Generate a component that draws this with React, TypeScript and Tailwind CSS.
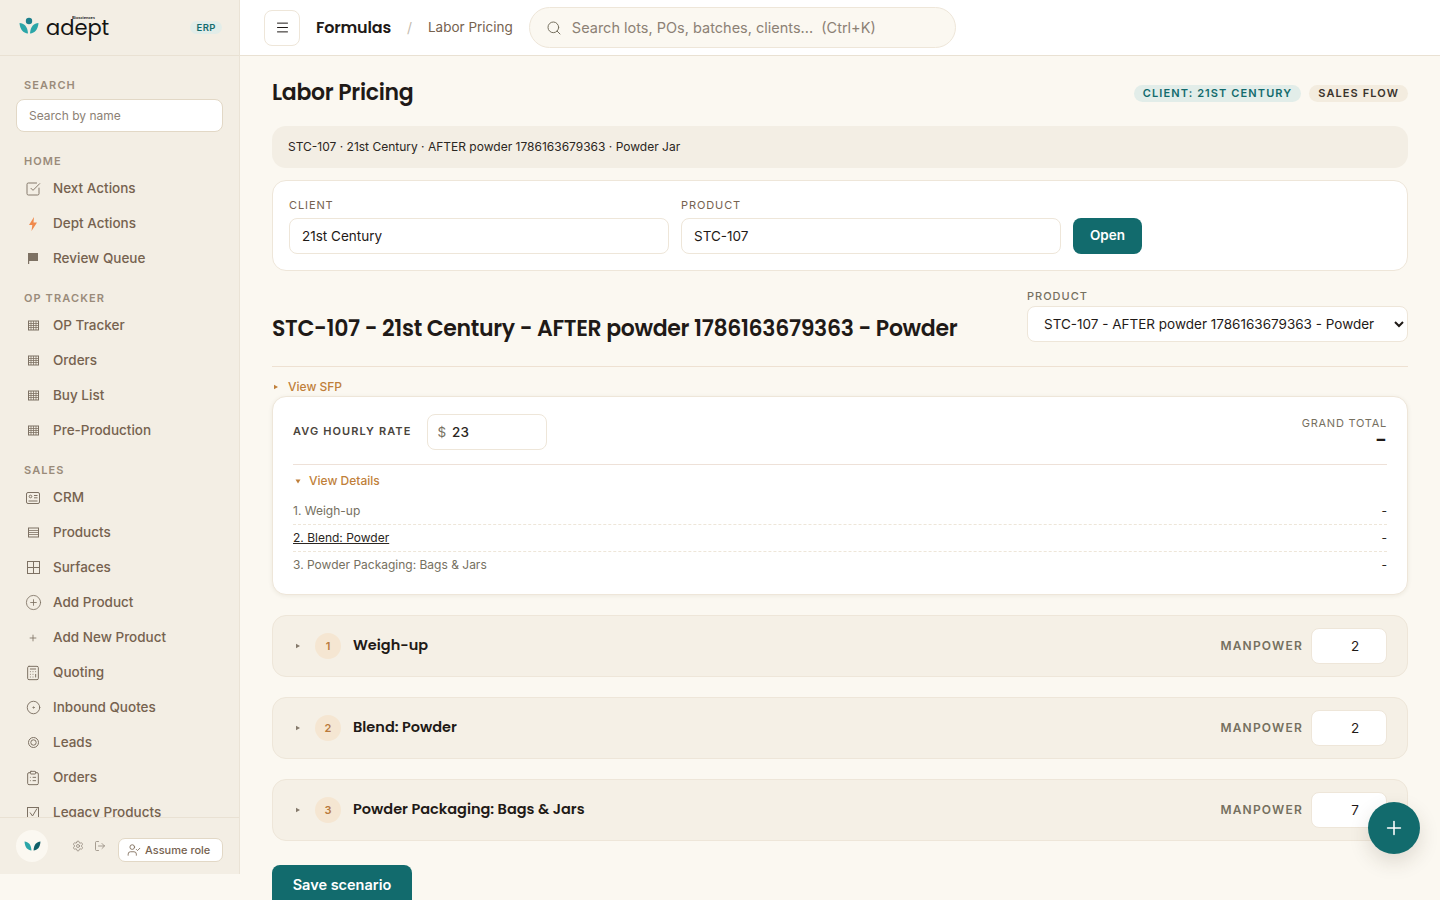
import type { ReactNode } from "react";
import {
  Calculator,
  CircleDot,
  CirclePlus,
  ClipboardList,
  LogOut,
  Menu,
  Plus,
  Search,
  Settings,
  SquareCheckBig,
  UserCheck,
} from "lucide-react";

const HEADING = "font-['Poppins','Inter',sans-serif]";

function GridIcon() {
  return (
    <svg width="11" height="11" viewBox="0 0 11 11" className="text-[#7d7163]">
      <rect x="0.5" y="1" width="10" height="9" fill="none" stroke="currentColor" />
      <path d="M0 3.5h11M0 5.5h11M0 7.5h11M3 1v9M5.5 1v9M8 1v9" stroke="currentColor" strokeWidth="0.8" />
    </svg>
  );
}

function LinesIcon() {
  return (
    <svg width="11" height="11" viewBox="0 0 11 11" className="text-[#7d7163]">
      <rect x="0.5" y="1" width="10" height="9" fill="none" stroke="currentColor" />
      <path d="M0 3.5h11M0 5.5h11M0 7.5h11" stroke="currentColor" strokeWidth="0.8" />
    </svg>
  );
}

function CardIcon() {
  return (
    <svg width="14" height="12" viewBox="0 0 14 12" fill="none" stroke="#7d7163">
      <rect x="0.5" y="0.5" width="13" height="11" rx="1.5" />
      <circle cx="4.5" cy="4.5" r="1.3" />
      <path d="M2.5 9h9M8 3.5h3.5M8 5.8h3.5" />
    </svg>
  );
}

function PaneIcon() {
  return (
    <svg width="13" height="13" viewBox="0 0 13 13" fill="none" stroke="#7d7163">
      <rect x="0.5" y="0.5" width="12" height="12" />
      <path d="M6.5 0.5v12M0.5 6.5h12" />
    </svg>
  );
}

function RingIcon() {
  return (
    <svg width="11" height="11" viewBox="0 0 11 11" fill="none" stroke="#7d7163">
      <circle cx="5.5" cy="5.5" r="5" />
      <circle cx="5.5" cy="5.5" r="2.7" />
    </svg>
  );
}

function BoltIcon() {
  return (
    <svg width="8" height="14" viewBox="0 0 8 14">
      <path d="M5 0L0 8H3.3L2.5 14L8 5.5H4.5Z" fill="#f0894c" />
    </svg>
  );
}

function FlagIcon() {
  return (
    <svg width="10" height="11" viewBox="0 0 10 11">
      <path d="M0 0H10V8H1.2V11H0Z" fill="#7d7163" />
    </svg>
  );
}

function BoxCheckIcon() {
  return (
    <svg width="12" height="12" viewBox="0 0 12 12" fill="none" stroke="#7d7163">
      <rect x="0.5" y="0.5" width="11" height="11" />
      <path d="M3 5.5L5.5 9L10 1.5" />
    </svg>
  );
}

function Caret({ open, className }: { open?: boolean; className: string }) {
  return (
    <svg width="6" height="6" viewBox="0 0 6 6" className={className}>
      <polygon points={open ? "0.5,1.5 5.5,1.5 3,5.5" : "1,0.8 5,3 1,5.2"} fill="currentColor" />
    </svg>
  );
}

function Leaves() {
  return (
    <svg width="17" height="10" viewBox="0 0 17 10">
      <path d="M0.5 0.5C4.5 0.8 7 3.5 7.5 9.5C3.5 9.2 1 6.5 0.5 0.5Z" fill="#2ba6a8" />
      <path d="M16.5 0.5C12.5 0.8 10 3.5 9.5 9.5C13.5 9.2 16 6.5 16.5 0.5Z" fill="#0f5f68" />
    </svg>
  );
}

type NavItem = { label: string; icon: ReactNode };

const iconSm = { size: 14, strokeWidth: 1.5, color: "#7d7163" };

const sections: { title: string; items: NavItem[] }[] = [
  {
    title: "HOME",
    items: [
      { label: "Next Actions", icon: <SquareCheckBig size={16} strokeWidth={1.4} color="#7d7163" /> },
      { label: "Dept Actions", icon: <BoltIcon /> },
      { label: "Review Queue", icon: <FlagIcon /> },
    ],
  },
  {
    title: "OP TRACKER",
    items: [
      { label: "OP Tracker", icon: <GridIcon /> },
      { label: "Orders", icon: <GridIcon /> },
      { label: "Buy List", icon: <GridIcon /> },
      { label: "Pre-Production", icon: <GridIcon /> },
    ],
  },
  {
    title: "SALES",
    items: [
      { label: "CRM", icon: <CardIcon /> },
      { label: "Products", icon: <LinesIcon /> },
      { label: "Surfaces", icon: <PaneIcon /> },
      { label: "Add Product", icon: <CirclePlus size={17} strokeWidth={1.2} color="#7d7163" /> },
      { label: "Add New Product", icon: <Plus size={10} strokeWidth={2} color="#7d7163" /> },
      { label: "Quoting", icon: <Calculator {...iconSm} size={16} /> },
      { label: "Inbound Quotes", icon: <CircleDot {...iconSm} size={15} /> },
      { label: "Leads", icon: <RingIcon /> },
      { label: "Orders", icon: <ClipboardList {...iconSm} size={16} /> },
      { label: "Legacy Products", icon: <BoxCheckIcon /> },
    ],
  },
];

function Sidebar() {
  return (
    <aside className="flex h-[874px] w-[240px] shrink-0 flex-col border-r border-[#eae3d6] bg-[#f3eee4]">
      <div className="flex h-[56px] shrink-0 items-center justify-between border-b border-[#e9e1d3] pl-[19px] pr-[17px]">
        <div className="mt-[-4px] flex items-center gap-[7px]">
          <svg width="20" height="17" viewBox="0 0 20 17">
            <circle cx="10" cy="4" r="3.2" fill="#1c7f8c" />
            <path d="M0.5 6C5 6.3 8.5 9 9 16.5C4 16 1 12.5 0.5 6Z" fill="#2ba6a8" />
            <path d="M19.5 6C15 6.3 11.5 9 11 16.5C16 16 19 12.5 19.5 6Z" fill="#2ba6a8" />
          </svg>
          <div className="flex flex-col">
            <span className="ml-[26px] h-[4px] origin-left scale-[0.55] font-['Lato',sans-serif] text-[8px] font-bold leading-[4px] text-[#1a1a1a]">
              Biosciences
            </span>
            <span className={`${HEADING} block text-[21px] leading-[17px] text-[#141414]`}>adept</span>
          </div>
        </div>
        <span className="rounded-full bg-[#e2ede9] px-[6px] py-[2px] text-[9.5px] font-semibold leading-[9px] tracking-[0.5px] text-[#126b6d]">
          ERP
        </span>
      </div>

      <div className="min-h-0 flex-1 overflow-hidden px-[16px] pt-[22px]">
        <div className="px-[8px] text-[11px] font-semibold leading-[14px] tracking-[1.1px] text-[#9a8b7a]">SEARCH</div>
        <input
          placeholder="Search by name"
          className="mt-[7px] block h-[33px] w-full rounded-[8px] border border-[#e2d8c6] bg-white px-[12px] text-[12px] text-[#1f1a17] outline-none placeholder:text-[#8c8175]"
        />
        <div className="mt-[20px] flex flex-col gap-[13px]">
          {sections.map((section) => (
            <div key={section.title}>
              <div className="mb-[1px] flex h-[18px] items-center px-[8px] text-[11px] font-semibold tracking-[1.1px] text-[#9a8b7a]">
                {section.title}
              </div>
              {section.items.map((item, i) => (
                <div key={item.label + i} className="flex h-[35px] items-center text-[13.5px] font-medium text-[#76624f]">
                  <span className="mr-[3px] flex w-[34px] shrink-0 justify-center">{item.icon}</span>
                  <span>{item.label}</span>
                </div>
              ))}
            </div>
          ))}
        </div>
      </div>

      <div className="flex h-[57px] shrink-0 items-center border-t border-[#e9e1d3] pl-[16px] pr-[16px]">
        <div className="flex size-[32px] items-center justify-center rounded-full bg-[#fbf8f1]">
          <Leaves />
        </div>
        <Settings size={12} strokeWidth={1.5} color="#8c8175" className="ml-[24px] mt-[-1px]" />
        <LogOut size={12} strokeWidth={1.5} color="#8c8175" className="ml-[10px] mt-[-1px]" />
        <button className="ml-auto mt-[8px] flex h-[24px] w-[105px] items-center gap-[4px] rounded-[7px] border border-[#e2d8c6] bg-white pl-[8px] text-[11px] font-medium text-[#76624f]">
          <UserCheck size={14} strokeWidth={1.4} />
          Assume role
        </button>
      </div>
    </aside>
  );
}

function TopBar() {
  return (
    <header className="flex h-[56px] shrink-0 items-center border-b border-[#e9e1d3] bg-white pl-[24px]">
      <button className="flex size-[36px] items-center justify-center rounded-[8px] border border-[#eee6d9] bg-white text-[#1f1a17]">
        <Menu size={15} strokeWidth={1.6} />
      </button>
      <span className={`${HEADING} ml-[16px] text-[16px] font-semibold tracking-[-0.2px] text-[#1f1a17]`}>Formulas</span>
      <span className="ml-[16px] text-[14px] text-[#c4bbae]">/</span>
      <span className="ml-[16px] text-[13.5px] text-[#76624f]">Labor Pricing</span>
      <div className="ml-[16px] flex h-[41px] w-[427px] items-center gap-[10px] rounded-full border border-[#eee6d9] bg-[#fbf8f1] px-[16px]">
        <Search size={16} strokeWidth={1.5} color="#76705f" />
        <span className="whitespace-pre text-[14.5px] text-[#8c8175]">Search lots, POs, batches, clients...  (Ctrl+K)</span>
      </div>
    </header>
  );
}

const fieldClass =
  "h-[36px] w-[380px] rounded-[8px] border border-[#eee6d9] bg-white px-[12px] text-[13.5px] text-[#1f1a17] outline-none";

function Field({ label, value }: { label: string; value: string }) {
  return (
    <label className="flex flex-col">
      <span className="mb-[6px] text-[11px] leading-[13px] tracking-[0.9px] text-[#76624f]">{label}</span>
      <input readOnly value={value} className={fieldClass} />
    </label>
  );
}

const steps = [
  { n: 1, name: "Weigh-up", manpower: 2 },
  { n: 2, name: "Blend: Powder", manpower: 2 },
  { n: 3, name: "Powder Packaging: Bags & Jars", manpower: 7 },
];

function Step({ n, name, manpower }: { n: number; name: string; manpower: number }) {
  return (
    <div className="flex h-[62px] items-center rounded-[14px] border border-[#eee6d9] bg-[#f5f0e6] pl-[22px] pr-[20px]">
      <Caret className="text-[#857a6c]" />
      <span className="ml-[14px] flex size-[26px] items-center justify-center rounded-full bg-[#f5e6d2] text-[11px] font-semibold text-[#b97a3d]">
        {n}
      </span>
      <span className={`${HEADING} ml-[12px] text-[14.5px] font-semibold text-[#1f1a17]`}>{name}</span>
      <span className="ml-auto text-[12px] font-semibold tracking-[1.2px] text-[#76705f]">MANPOWER</span>
      <input
        readOnly
        value={manpower}
        className="ml-[8px] h-[36px] w-[76px] rounded-[8px] border border-[#eee6d9] bg-white pl-[12px] text-center text-[13.5px] text-[#1f1a17] outline-none"
      />
    </div>
  );
}

const breakdown = [
  { label: "1. Weigh-up", active: false },
  { label: "2. Blend: Powder", active: true },
  { label: "3. Powder Packaging: Bags & Jars", active: false },
];

export default function App() {
  return (
    <div className="flex h-[900px] overflow-hidden bg-[#fbf8f1] font-['Inter',sans-serif]">
      <Sidebar />
      <div className="flex min-w-0 flex-1 flex-col">
        <TopBar />
        <main className="min-h-0 flex-1 overflow-hidden px-[32px]">
          {/* Title row */}
          <div className="flex h-[70px] items-center justify-between">
            <h1 className={`${HEADING} mt-[2px] text-[22px] font-semibold tracking-[-0.3px] text-[#1f1a17]`}>Labor Pricing</h1>
            <div className="mt-[4px] flex items-center gap-[8px]">
              <span className="rounded-full bg-[#e2ede9] px-[9px] py-[3px] text-[11px] font-semibold leading-[11px] tracking-[1.1px] text-[#126b6d]">
                CLIENT: 21ST CENTURY
              </span>
              <span className="rounded-full bg-[#f3ecdf] px-[9px] py-[3px] text-[11px] font-semibold leading-[11px] tracking-[1.1px] text-[#3a332c]">
                SALES FLOW
              </span>
            </div>
          </div>

          <div className="flex h-[42px] items-center rounded-[14px] bg-[#f3eee4] px-[16px] text-[12px] text-[#2b2622]">
            STC-107 · 21st Century · AFTER powder 1786163679363 · Powder Jar
          </div>

          {/* Client and product picker */}
          <div className="mt-[12px] flex h-[91px] items-end gap-[12px] rounded-[14px] border border-[#eee6d9] bg-white px-[16px] pb-[16px]">
            <Field label="CLIENT" value="21st Century" />
            <Field label="PRODUCT" value="STC-107" />
            <button className="h-[36px] w-[69px] rounded-[8px] bg-[#126b6d] pb-[2px] text-[13.5px] font-semibold text-white">Open</button>
          </div>

          {/* Product heading */}
          <div className="mt-[18px] flex items-end justify-between border-b border-[#eee1d2] pb-[24px]">
            <h2 className={`${HEADING} translate-y-[4px] text-[22px] font-semibold leading-[34px] tracking-[-0.33px] text-[#1f1a17]`}>
              STC-107 - 21st Century - AFTER powder 1786163679363 - Powder
            </h2>
            <label className="flex w-[381px] flex-col">
              <span className="mb-[3px] text-[11px] font-medium leading-[14px] tracking-[1px] text-[#76705f]">PRODUCT</span>
              <select className="h-[36px] rounded-[8px] border border-[#eee6d9] bg-white px-[12px] text-[13.5px] text-[#1f1a17] outline-none">
                <option>STC-107 - AFTER powder 1786163679363 - Powder</option>
              </select>
            </label>
          </div>

          <div className="flex h-[29px] items-center pt-[10px] text-[12px] font-medium text-[#c07f3a]">
            <Caret className="ml-[1px] text-[#c07f3a]" />
            <span className="ml-[9px]">View SFP</span>
          </div>

          {/* Labor summary */}
          <div className="rounded-[14px] border border-[#eee6d9] bg-white px-[20px] pt-[17px] pb-[16px] shadow-[0_1px_4px_rgba(80,60,30,0.08)]">
            <div className="flex h-[51px] items-start justify-between border-b border-[#eee1d8]">
              <div className="flex items-center gap-[16px]">
                <span className="mb-[2px] text-[11px] font-semibold tracking-[1.1px] text-[#4a443c]">AVG HOURLY RATE</span>
                <div className="flex h-[36px] w-[120px] items-center gap-[6px] rounded-[8px] border border-[#eee6d9] px-[9px]">
                  <span className="text-[13.5px] text-[#76705f]">$</span>
                  <span className="text-[13.5px] font-medium text-[#2b2622]">23</span>
                </div>
              </div>
              <div className="mt-[2px] text-right">
                <div className="text-[11px] leading-[14px] tracking-[0.75px] text-[#76705f]">GRAND TOTAL</div>
                <div className={`${HEADING} mt-[2px] text-[20px] font-semibold leading-[16px] text-[#1f1a17]`}>-</div>
              </div>
            </div>
            <div className="flex h-[32px] items-center pl-[2px] text-[12px] font-medium text-[#c07f3a]">
              <Caret open className="text-[#c07f3a]" />
              <span className="ml-[8px]">View Details</span>
            </div>
            <div className="flex flex-col">
              {breakdown.map((row, i) => (
                <div
                  key={row.label}
                  className={`flex h-[27px] items-center justify-between text-[12px] ${
                    i > 0 ? "border-t border-dashed border-[#eee6d9]" : "pt-[1px]"
                  } ${row.active ? "text-[#2b2622]" : "text-[#76705f]"}`}
                >
                  <span className={row.active ? "underline" : ""}>{row.label}</span>
                  <span className="text-[#2b2622]">-</span>
                </div>
              ))}
            </div>
          </div>

          {/* Process steps */}
          <div className="mt-[20px] flex flex-col gap-[20px]">
            {steps.map((s) => (
              <Step key={s.n} {...s} />
            ))}
          </div>

          <button className="mt-[24px] h-[44px] w-[140px] rounded-[8px] bg-[#126b6d] pb-[4px] text-[14.5px] font-semibold text-white">
            Save scenario
          </button>
        </main>
      </div>

      <button className="fixed bottom-[46px] right-[20px] flex size-[52px] items-center justify-center rounded-full bg-[#126b6d] text-white shadow-[0_8px_20px_rgba(60,50,30,0.15)]">
        <Plus size={22} strokeWidth={1.7} />
      </button>
    </div>
  );
}
